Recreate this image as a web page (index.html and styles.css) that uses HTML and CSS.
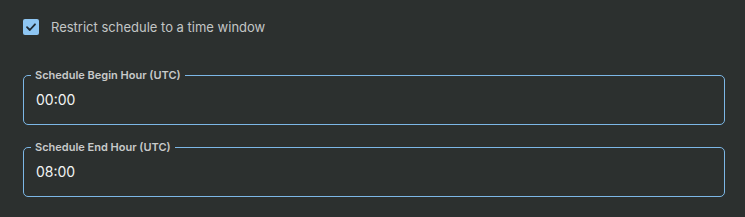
FILE: index.html
```html
<!DOCTYPE html>
<html>
<head>
<meta charset="utf-8">
<link rel="stylesheet" href="styles.css">
</head>
<body>
<div class="page">
  <label class="check-row">
    <span class="checkbox">
      <svg width="12" height="12" viewBox="0 0 12 12"><path d="M2 6.2 L4.8 9 L10 3.3" fill="none" stroke="#1f2a33" stroke-width="1.8" stroke-linecap="round" stroke-linejoin="round"/></svg>
    </span>
    <span class="check-label">Restrict schedule to a time window</span>
  </label>
  <fieldset class="field">
    <legend>Schedule Begin Hour (UTC)</legend>
    <div class="value">00:00</div>
  </fieldset>
  <fieldset class="field">
    <legend>Schedule End Hour (UTC)</legend>
    <div class="value">08:00</div>
  </fieldset>
</div>
</body>
</html>
```
FILE: styles.css
```css
html, body {
  margin: 0;
  background: #2c302f;
}
body {
  font-family: Inter, "Noto Sans", sans-serif;
}
.page {
  padding: 19px 20px 0 23px;
  display: flex;
  flex-direction: column;
}
.check-row {
  display: flex;
  align-items: center;
  gap: 12px;
  height: 16px;
}
.checkbox {
  width: 16px;
  height: 16px;
  border-radius: 2px;
  background: #8ec6f3;
  display: flex;
  align-items: center;
  justify-content: center;
}
.check-label {
  color: #c3c6c6;
  font-size: 13px;
}
.field {
  margin: 0;
  padding: 0 12px;
  border: 1px solid #7cb7e6;
  border-radius: 5px;
  height: 57px;
  box-sizing: border-box;
  min-width: 0;
}
.field:first-of-type {
  margin-top: 33px;
}
.field + .field {
  margin-top: 15px;
}
.field legend {
  padding: 0 4px;
  margin-left: -5px;
  font-size: 11px;
  font-weight: 600;
  color: #c8caca;
  line-height: 14px;
}
.value {
  color: #f2f4f4;
  font-size: 14px;
  line-height: 17px;
  padding-top: 9px;
}
```
